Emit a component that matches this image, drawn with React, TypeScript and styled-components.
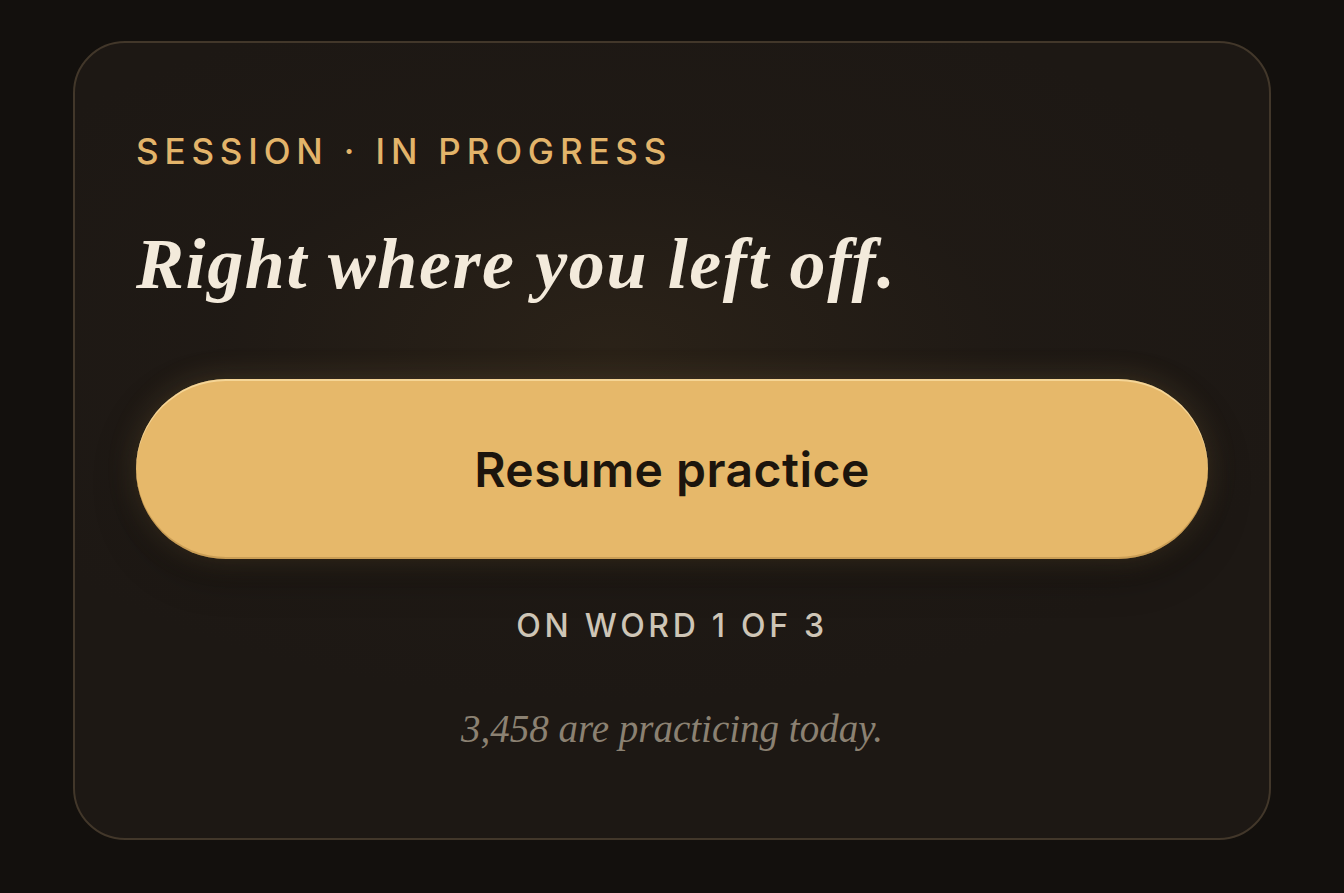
import styled, { createGlobalStyle } from "styled-components";

const GlobalStyle = createGlobalStyle`
    html, body {
        margin: 0;
        padding: 0;
        background: #13100d;
    }
    body {
        font-family: Inter, "Noto Sans", sans-serif;
    }
`;

const App = () => {
    return (
        <>
            <GlobalStyle />
            <Page>
                <Card>
                    <Eyebrow>Session · In progress</Eyebrow>
                    <Headline>Right where you left off.</Headline>
                    <ResumeButton type="button">Resume practice</ResumeButton>
                    <Progress>On word 1 of 3</Progress>
                    <Footnote>3,458 are practicing today.</Footnote>
                </Card>
            </Page>
        </>
    );
};

const Page = styled.div`
    min-height: 893px;
    box-sizing: border-box;
    padding: 41px 73px 55px;
`;

const Card = styled.section`
    box-sizing: border-box;
    display: flex;
    flex-direction: column;
    padding: 87px 61px 86px;
    border: 2px solid #42372a;
    border-radius: 52px;
    background:
        radial-gradient(
            ellipse 60% 45% at 45% 38%,
            rgba(56, 44, 28, 0.5) 0%,
            rgba(40, 32, 24, 0.2) 55%,
            rgba(0, 0, 0, 0) 100%
        ),
        #1d1814;
`;

const Eyebrow = styled.div`
    font-family: Inter, sans-serif;
    font-size: 35px;
    line-height: 42px;
    font-weight: 500;
    letter-spacing: 0.167em;
    text-transform: uppercase;
    color: #e3b46a;
`;

const Headline = styled.h1`
    margin: 52px 0 0;
    font-family: "Liberation Serif", "DejaVu Serif", serif;
    font-style: italic;
    font-weight: 700;
    font-size: 72px;
    line-height: 80px;
    letter-spacing: 1.6px;
    color: #f3eadb;
`;

const ResumeButton = styled.button`
    margin-top: 75px;
    height: 180px;
    width: 100%;
    border: none;
    border-radius: 90px;
    background: #e6b86a;
    color: #1c150d;
    font-family: Inter, sans-serif;
    font-size: 48px;
    font-weight: 600;
    letter-spacing: 0.01em;
    cursor: pointer;
    box-shadow:
        inset 0 2px 0 rgba(255, 232, 180, 0.6),
        inset 0 -2px 0 rgba(150, 110, 50, 0.35),
        0 0 30px rgba(230, 184, 106, 0.18),
        0 14px 40px rgba(0, 0, 0, 0.35);
`;

const Progress = styled.div`
    margin-top: 48px;
    text-align: center;
    font-family: Inter, sans-serif;
    font-size: 32px;
    line-height: 38px;
    font-weight: 500;
    letter-spacing: 0.115em;
    text-transform: uppercase;
    color: #cec5b6;
`;

const Footnote = styled.p`
    margin: 61px 0 0;
    text-align: center;
    font-family: "Liberation Serif", "DejaVu Serif", serif;
    font-style: italic;
    font-size: 39px;
    line-height: 46px;
    color: #8b8172;
`;

export default App;
